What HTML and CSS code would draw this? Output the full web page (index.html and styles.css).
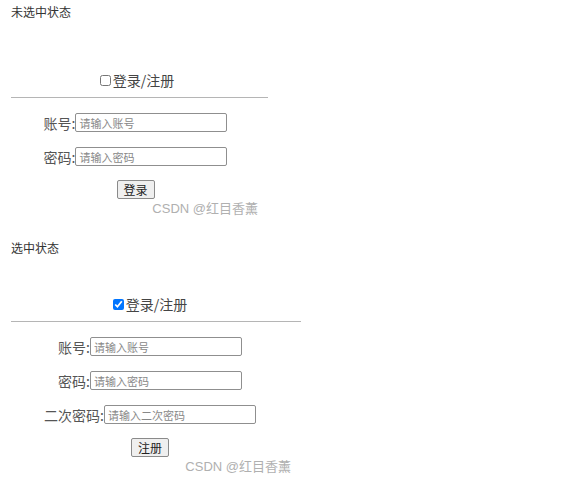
FILE: index.html
```html
<!DOCTYPE html>
<html lang="zh">
<head>
<meta charset="utf-8">
<link rel="stylesheet" href="styles.css">
</head>
<body>
  <div class="caption cap-first">未选中状态</div>
  <div class="box box-login">
    <div class="head"><input type="checkbox" class="chk"><span>登录/注册</span></div>
    <div class="rule"></div>
    <div class="rows">
      <div class="row"><label>账号:</label><input class="field" placeholder="请输入账号"></div>
      <div class="row"><label>密码:</label><input class="field" placeholder="请输入密码"></div>
      <div class="row btn-row"><button class="btn">登录</button></div>
    </div>
    <div class="mark">CSDN @红目香薰</div>
  </div>

  <div class="caption cap-second">选中状态</div>
  <div class="box box-reg">
    <div class="head"><input type="checkbox" class="chk" checked><span>登录/注册</span></div>
    <div class="rule"></div>
    <div class="rows">
      <div class="row"><label>账号:</label><input class="field" placeholder="请输入账号"></div>
      <div class="row"><label>密码:</label><input class="field" placeholder="请输入密码"></div>
      <div class="row"><label>二次密码:</label><input class="field" placeholder="请输入二次密码"></div>
      <div class="row btn-row"><button class="btn">注册</button></div>
    </div>
    <div class="mark">CSDN @红目香薰</div>
  </div>
</body>
</html>
```

FILE: styles.css
```css
html, body {
  margin: 0;
  background: #fff;
}
body {
  padding: 5px 11px 0;
  font-family: "Noto Sans CJK SC", "Noto Sans", sans-serif;
  color: #333;
}
.caption {
  font-size: 12px;
  line-height: 14px;
  color: #333;
}
.cap-second {
  margin-top: 25px;
}
.box {
  display: flex;
  flex-direction: column;
}
.box-login { width: 257px; --shift: 8px; margin-top: 53px; }
.box-reg { width: 290px; --shift: 12px; margin-top: 41px; }
.head {
  display: flex;
  justify-content: center;
  align-items: center;
  padding-right: var(--shift);
  font-size: 14px;
  line-height: 16px;
  color: #444;
}
.box-login .head { padding-left: 3px; }
.chk {
  width: 11px;
  height: 11px;
  margin: 0 2px 0 0;
}
.rule {
  height: 1px;
  background: #b5b5b5;
  margin-top: 9px;
}
.rows {
  display: flex;
  flex-direction: column;
  align-items: center;
  padding-right: var(--shift);
  gap: 15px;
  margin-top: 15px;
}
.row {
  display: flex;
  align-items: center;
  height: 19px;
}
.row label {
  font-size: 14px;
  color: #555;
  line-height: 16px;
}
.field {
  box-sizing: border-box;
  width: 152px;
  height: 19px;
  border: 1px solid #8f8f8f;
  border-radius: 2px;
  padding: 0 3px;
  font-family: "Noto Sans CJK SC", sans-serif;
  font-size: 11px;
  color: #333;
  outline: none;
}
.field::placeholder {
  color: #888;
}
.btn-row {
  margin-top: -1px;
}
.btn {
  box-sizing: border-box;
  width: 38px;
  height: 19px;
  padding: 0;
  border: 1px solid #8a8a8a;
  border-radius: 2px;
  background: #efefef;
  font-family: "Noto Sans CJK SC", sans-serif;
  font-size: 12px;
  line-height: 15px;
  color: #222;
}
.mark {
  align-self: flex-end;
  margin-right: 10px;
  margin-top: 2px;
  font-family: "Liberation Sans", "Noto Sans CJK SC", sans-serif;
  font-size: 13px;
  line-height: 15px;
  color: #b0b0b0;
}
```
